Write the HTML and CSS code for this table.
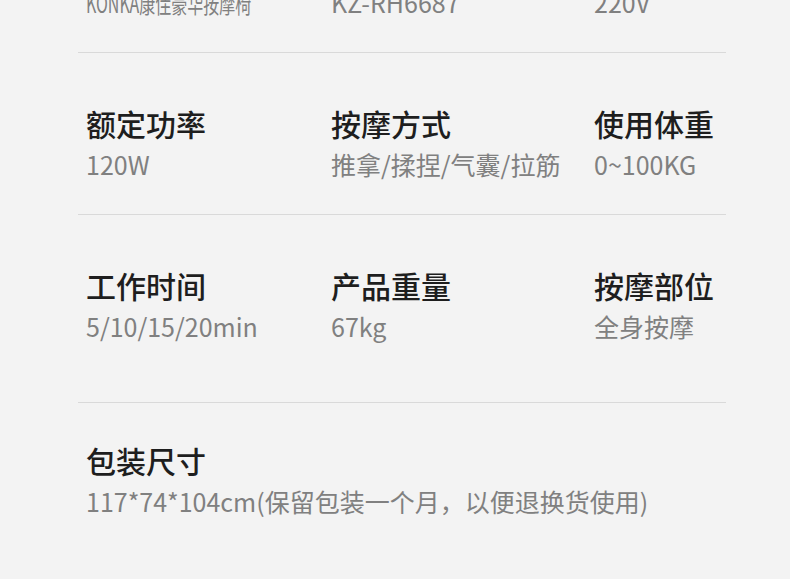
FILE: index.html
```html
<!DOCTYPE html>
<html lang="zh-CN">
<head>
  <meta charset="UTF-8">
  <meta name="viewport" content="width=device-width, initial-scale=1.0">
  <title>产品参数</title>
  <link rel="stylesheet" href="styles.css">
</head>
<body>
  <div class="specs">
    <div class="spec-row">
      <div class="spec">
        <div class="label">产品名称</div>
        <div class="value value--narrow">KONKA康佳豪华按摩椅</div>
      </div>
      <div class="spec">
        <div class="label">产品型号</div>
        <div class="value">KZ-RH6687</div>
      </div>
      <div class="spec">
        <div class="label">额定电压</div>
        <div class="value">220V</div>
      </div>
    </div>

    <div class="spec-row">
      <div class="spec">
        <div class="label">额定功率</div>
        <div class="value">120W</div>
      </div>
      <div class="spec">
        <div class="label">按摩方式</div>
        <div class="value">推拿/揉捏/气囊/拉筋</div>
      </div>
      <div class="spec">
        <div class="label">使用体重</div>
        <div class="value">0~100KG</div>
      </div>
    </div>

    <div class="spec-row spec-row--tall">
      <div class="spec">
        <div class="label">工作时间</div>
        <div class="value">5/10/15/20min</div>
      </div>
      <div class="spec">
        <div class="label">产品重量</div>
        <div class="value">67kg</div>
      </div>
      <div class="spec">
        <div class="label">按摩部位</div>
        <div class="value">全身按摩</div>
      </div>
    </div>

    <div class="spec-row spec-row--last">
      <div class="spec spec--wide">
        <div class="label">包装尺寸</div>
        <div class="value">117*74*104cm(保留包装一个月，以便退换货使用)</div>
      </div>
    </div>
  </div>
</body>
</html>
```

FILE: styles.css
```css
body {
  margin: 0;
  background: #f3f3f3;
  font-family: "Noto Sans CJK SC", "Noto Sans", sans-serif;
  overflow: hidden;
}
.specs {
  width: 648px;
  margin: -109px 0 0 78px;
}
.spec-row {
  display: grid;
  grid-template-columns: 245px 263px 1fr;
  padding: 50px 0 32px 8px;
  border-bottom: 1px solid #d9d9d9;
}
.spec-row--tall {
  padding-bottom: 58px;
}
.spec-row--last {
  padding-top: 37px;
  border-bottom: none;
}
.spec--wide {
  grid-column: 1 / -1;
}
.label {
  font-size: 30px;
  font-weight: 500;
  line-height: 40px;
  color: #1e1e1e;
  margin-bottom: 3px;
  white-space: nowrap;
}
.value {
  font-size: 25px;
  line-height: 36px;
  color: #808080;
  white-space: nowrap;
}
.value--narrow {
  transform: scaleX(0.64);
  transform-origin: left center;
}
```
